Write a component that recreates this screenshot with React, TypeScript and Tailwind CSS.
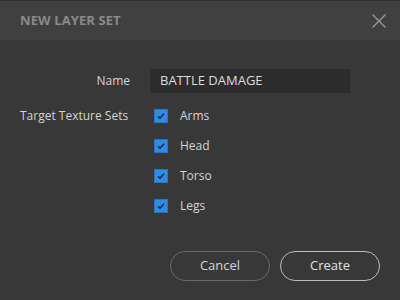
import React from "react";

const Check = () => (
  <div className="w-[14px] h-[14px] bg-[#2d8ce8] border border-[#2576c4] flex items-center justify-center">
    <svg width="10" height="10" viewBox="0 0 10 10">
      <path d="M2 5.2 L4 7.2 L8 2.8" fill="none" stroke="#1e2a38" strokeWidth="1.6" />
    </svg>
  </div>
);

export default function App() {
  const sets = ["Arms", "Head", "Torso", "Legs"];
  return (
    <div className="w-[400px] h-[300px] bg-[#383838] flex flex-col text-[12px] text-[#d4d4d4]" style={{ fontFamily: '"Open Sans", "Liberation Sans", sans-serif' }}>
      <div className="h-[40px] bg-[#404040] border-t border-[#303030] flex items-center justify-between pl-[20px] pr-[13px]">
        <span className="font-bold text-[13px] text-[#8a8a8a] tracking-[0.1px]">NEW LAYER SET</span>
        <svg width="16" height="16" viewBox="0 0 16 16">
          <path d="M1.5 1.5 L14.5 14.5 M14.5 1.5 L1.5 14.5" stroke="#9a9a9a" strokeWidth="1.3" />
        </svg>
      </div>
      <div className="flex flex-col pt-[29px]">
        <div className="flex items-center h-[24px]">
          <div className="w-[130px] text-right">Name</div>
          <div className="ml-[20px] w-[200px] h-[24px] bg-[#2c2c2c] flex items-center pl-[10px] text-[13px] text-[#dcdcdc]">BATTLE DAMAGE</div>
        </div>
        <div className="flex mt-[16px]">
          <div className="w-[127px] text-right pl-[20px] h-[14px] leading-[14px] whitespace-nowrap">Target Texture Sets</div>
          <div className="ml-[27px] flex flex-col gap-[16px]">
            {sets.map((s) => (
              <div key={s} className="flex items-center h-[14px]">
                <Check />
                <span className="ml-[12px] leading-[14px]">{s}</span>
              </div>
            ))}
          </div>
        </div>
        <div className="flex justify-end gap-[10px] pr-[20px] mt-[38px]">
          <button className="w-[100px] h-[30px] rounded-full border border-[#6a6a6a] text-[13px] text-[#d4d4d4]">Cancel</button>
          <button className="w-[100px] h-[30px] rounded-full border border-[#bdbdbd] text-[13px] text-[#e0e0e0]">Create</button>
        </div>
      </div>
    </div>
  );
}
